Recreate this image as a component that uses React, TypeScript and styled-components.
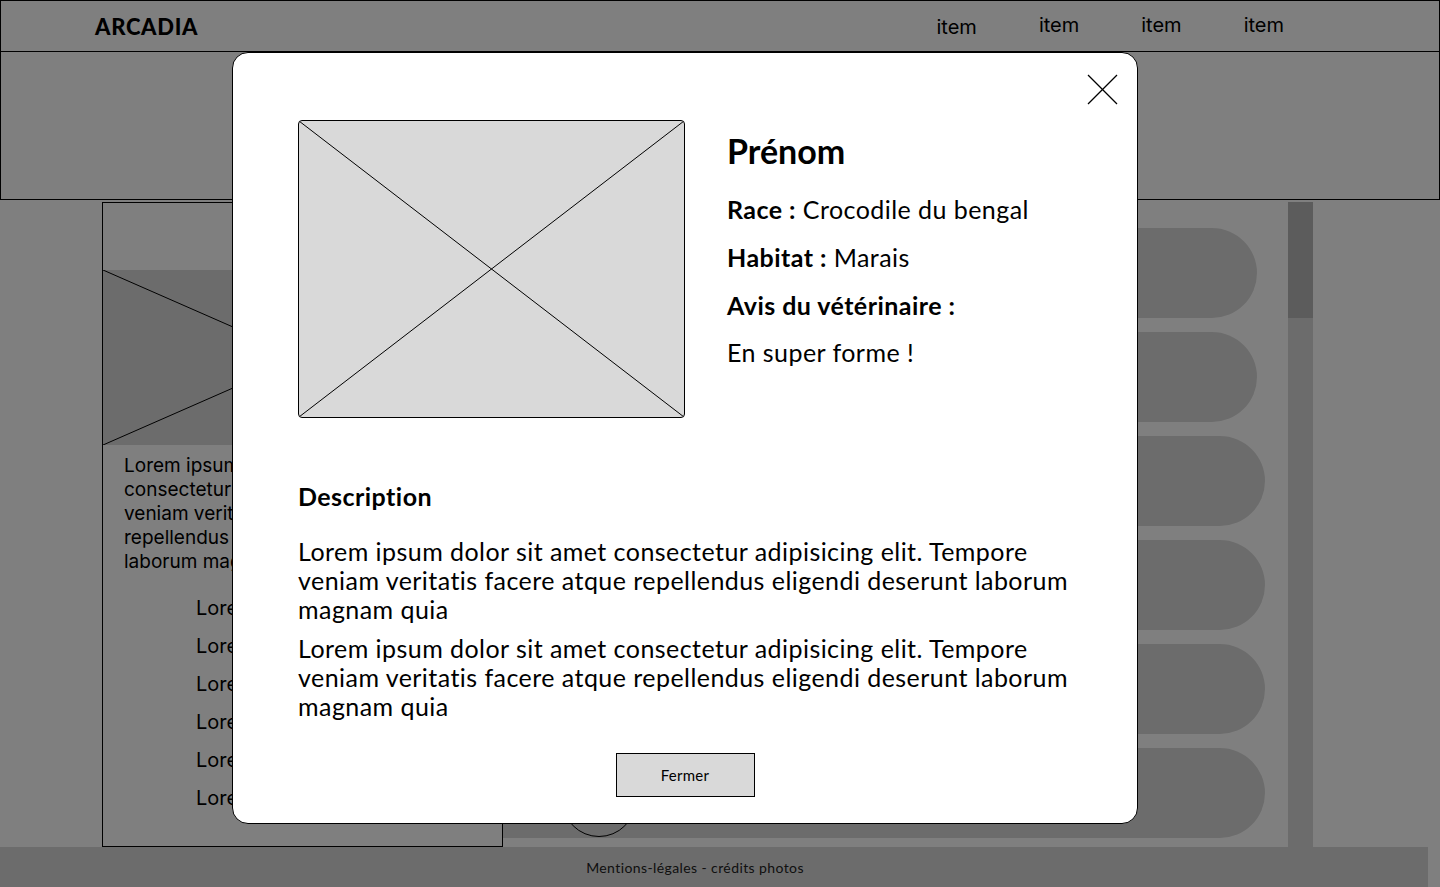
import type { FC } from 'react'
import styled, { createGlobalStyle } from 'styled-components'

const GlobalStyle = createGlobalStyle`
  body {
    margin: 0;
    background: #ffffff;
    font-family: Inter, "Liberation Sans", sans-serif;
    color: #000;
  }
  * {
    box-sizing: border-box;
  }
`

export const Page = styled.div`
  width: 1440px;
  height: 887px;
  overflow: hidden;
`

export const Header = styled.header`
  display: flex;
  align-items: center;
  height: 52px;
  padding-left: 94px;
  padding-right: 155px;
  border: 1px solid #000;
`

export const Logo = styled.div`
  font-family: Lato, sans-serif;
  font-weight: 900;
  font-size: 22px;
  letter-spacing: 0.7px;
`

export const Nav = styled.nav`
  display: flex;
  gap: 62px;
  margin-left: auto;
`

export const NavItem = styled.a<{ $low?: boolean }>`
  font-family: Inter, sans-serif;
  font-size: 20px;
  color: #000;
  margin-top: ${(p) => (p.$low ? '2px' : '0')};
`

export const Hero = styled.section`
  height: 148px;
  border: 1px solid #000;
  border-top: none;
`

export const Main = styled.main`
  display: grid;
  grid-template-columns: 401px 785px 25px;
  height: 645px;
  margin-top: 2px;
  padding-left: 102px;
`

export const Card = styled.article`
  display: flex;
  flex-direction: column;
  border: 1px solid #000;
`

export const CardTop = styled.div`
  height: 67px;
`

export const Placeholder = styled.div<{ $h: number }>`
  height: ${(p) => p.$h}px;
  background: #d9d9d9;

  svg {
    display: block;
    width: 100%;
    height: 100%;
  }
`

export const CardText = styled.p`
  margin: 0;
  padding: 9px 21px 0;
  font-size: 19px;
  line-height: 24px;
  white-space: nowrap;
`

export const CardList = styled.ul`
  list-style: none;
  margin: 15px 0 0;
  padding-left: 93px;
`

export const CardItem = styled.li`
  font-size: 20px;
  line-height: 38px;
`

export const PillList = styled.div`
  display: flex;
  flex-direction: column;
  gap: 14px;
  padding-top: 26px;
`

export const Pill = styled.div<{ $w: number }>`
  display: flex;
  align-items: flex-start;
  width: ${(p) => p.$w}px;
  height: 90px;
  padding-left: 59px;
  background: #d9d9d9;
  border-radius: 0 45px 45px 0;
`

export const Avatar = styled.div`
  width: 74px;
  height: 74px;
  margin-top: 15px;
  border: 1px solid #000;
  border-radius: 50%;
`

export const ScrollTrack = styled.div`
  background: #d9d9d9;
`

export const ScrollThumb = styled.div`
  height: 116px;
  background: #b8b8b8;
`

export const Footer = styled.footer`
  width: 1428px;
  height: 40px;
  display: flex;
  align-items: center;
  justify-content: center;
  padding-right: 38px;
  background: #d9d9d9;
  font-family: Lato, sans-serif;
  font-size: 14px;
  letter-spacing: 0.4px;
  color: #222;
`

export const Overlay = styled.div`
  position: fixed;
  inset: 0;
  background: rgba(0, 0, 0, 0.5);
`

export const Modal = styled.div`
  position: fixed;
  left: 232px;
  top: 52px;
  width: 906px;
  height: 772px;
  padding: 67px 65px 0;
  background: #fff;
  border: 1px solid #000;
  border-radius: 16px;
  font-family: Lato, sans-serif;
  letter-spacing: 0.45px;
`

export const CloseButton = styled.button`
  position: absolute;
  top: 21px;
  right: 19px;
  width: 31px;
  height: 31px;
  padding: 0;
  border: none;
  background: none;
  cursor: pointer;

  svg {
    display: block;
  }
`

export const TopRow = styled.div`
  display: flex;
  gap: 42px;
`

export const Photo = styled.div`
  width: 387px;
  height: 298px;
  flex-shrink: 0;
  overflow: hidden;
  background: #d9d9d9;
  border: 1px solid #000;
  border-radius: 4px;

  svg {
    display: block;
    width: 100%;
    height: 100%;
  }
`

export const Info = styled.div`
  display: flex;
  flex-direction: column;
  padding-top: 11px;
`

export const Name = styled.h2`
  margin: 0 0 14px;
  font-size: 34px;
  line-height: 40px;
  font-weight: 700;
  letter-spacing: 0;
`

export const InfoRow = styled.p<{ $h: number }>`
  margin: 0;
  font-size: 25px;
  line-height: ${(p) => p.$h}px;

  b {
    font-weight: 700;
  }
`

export const SectionTitle = styled.h3`
  margin: 63px 0 0;
  font-size: 25px;
  line-height: 30px;
  font-weight: 700;
`

export const Paragraph = styled.p<{ $first?: boolean }>`
  margin: ${(p) => (p.$first ? '26px' : '10px')} 0 0;
  font-size: 25px;
  line-height: 29px;
`

export const ButtonRow = styled.div`
  display: flex;
  justify-content: center;
  margin-top: 32px;
`

export const Button = styled.button`
  width: 139px;
  height: 44px;
  background: #d9d9d9;
  border: 1px solid #000;
  font-family: Lato, sans-serif;
  font-size: 15px;
  letter-spacing: 0.3px;
  color: #000;
`

const Cross: FC = () => (
  <svg viewBox="0 0 100 100" preserveAspectRatio="none">
    <line x1="0" y1="0" x2="100" y2="100" stroke="#000" strokeWidth="1" vectorEffect="non-scaling-stroke" />
    <line x1="0" y1="100" x2="100" y2="0" stroke="#000" strokeWidth="1" vectorEffect="non-scaling-stroke" />
  </svg>
)

const lorem =
  'Lorem ipsum dolor sit amet consectetur adipisicing elit. Tempore veniam veritatis facere atque repellendus eligendi deserunt laborum magnam quia'

const pills = [754, 754, 762, 762, 762, 762]

const App: FC = () => {
  return (
    <>
      <GlobalStyle />
      <Page>
        <Header>
          <Logo>ARCADIA</Logo>
          <Nav>
            <NavItem $low>item</NavItem>
            <NavItem>item</NavItem>
            <NavItem>item</NavItem>
            <NavItem>item</NavItem>
          </Nav>
        </Header>
        <Hero />
        <Main>
          <Card>
            <CardTop />
            <Placeholder $h={175}>
              <Cross />
            </Placeholder>
            <CardText>
              Lorem ipsum dolor sit amet
              <br />
              consectetur adipisicing elit. Tempore
              <br />
              veniam veritatis facere atque
              <br />
              repellendus eligendi deserunt
              <br />
              laborum magnam quia
            </CardText>
            <CardList>
              {Array.from({ length: 6 }).map((_, i) => (
                <CardItem key={i}>Lorem ipsum</CardItem>
              ))}
            </CardList>
          </Card>
          <PillList>
            {pills.map((w, i) => (
              <Pill key={i} $w={w}>
                <Avatar />
              </Pill>
            ))}
          </PillList>
          <ScrollTrack>
            <ScrollThumb />
          </ScrollTrack>
        </Main>
        <Footer>Mentions-légales - crédits photos</Footer>
      </Page>
      <Overlay />
      <Modal>
        <CloseButton aria-label="Fermer">
          <svg width="31" height="31" viewBox="0 0 31 31">
            <line x1="1" y1="1" x2="30" y2="30" stroke="#000" strokeWidth="1.3" />
            <line x1="1" y1="30" x2="30" y2="1" stroke="#000" strokeWidth="1.3" />
          </svg>
        </CloseButton>
        <TopRow>
          <Photo>
            <Cross />
          </Photo>
          <Info>
            <Name>Prénom</Name>
            <InfoRow $h={48}>
              <b>Race :</b> Crocodile du bengal
            </InfoRow>
            <InfoRow $h={49}>
              <b>Habitat :</b> Marais
            </InfoRow>
            <InfoRow $h={46}>
              <b>Avis du vétérinaire :</b>
            </InfoRow>
            <InfoRow $h={48}>En super forme !</InfoRow>
          </Info>
        </TopRow>
        <SectionTitle>Description</SectionTitle>
        <Paragraph $first>{lorem}</Paragraph>
        <Paragraph>{lorem}</Paragraph>
        <ButtonRow>
          <Button>Fermer</Button>
        </ButtonRow>
      </Modal>
    </>
  )
}

export default App
